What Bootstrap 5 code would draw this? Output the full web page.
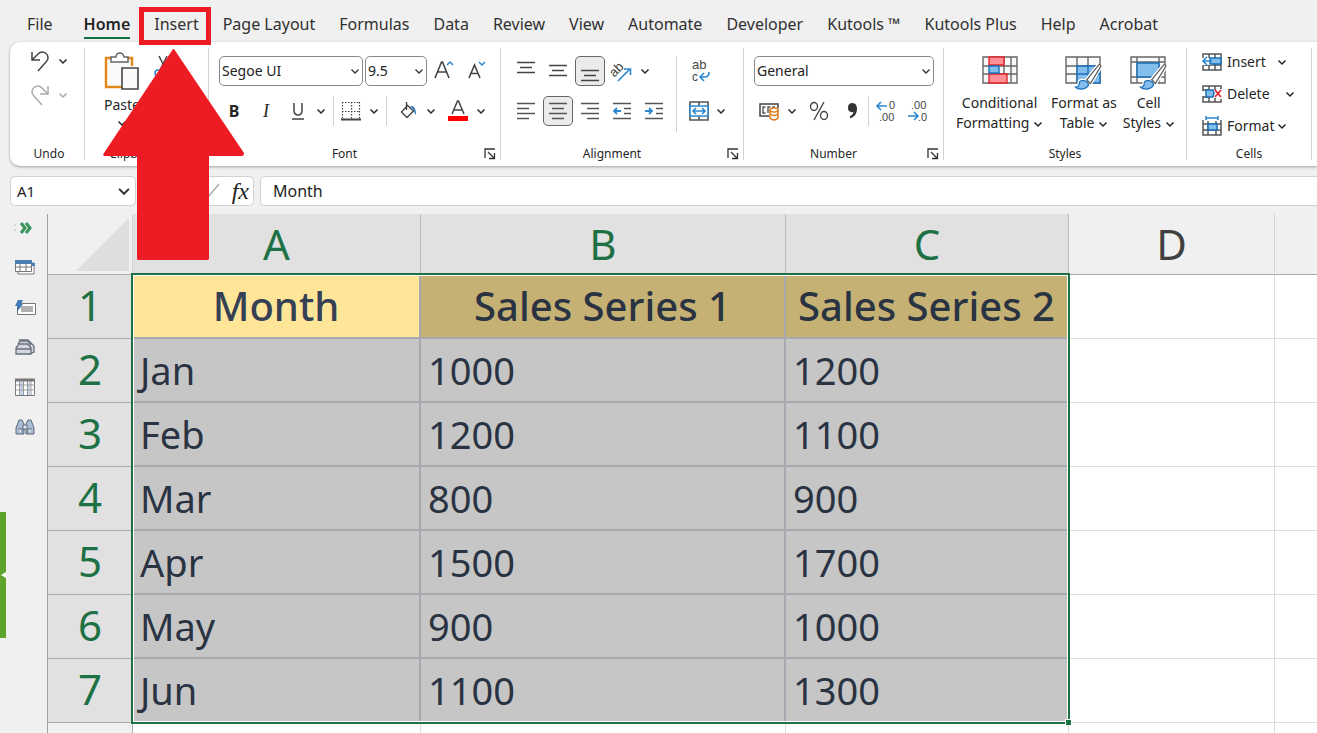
<!DOCTYPE html>
<html lang="en">
<head>
<meta charset="utf-8">
<meta name="viewport" content="width=device-width, initial-scale=1">
<title>Sales workbook</title>
<link href="https://cdn.jsdelivr.net/npm/bootstrap@5.3.0/dist/css/bootstrap.min.css" rel="stylesheet">
<style>
:root{--ink:#262626;--line:#d1d1d1;--green:#1e7145;--red:#ed1c24;--blue:#2b88d0}
body{background:#f0f0f0;color:var(--ink);font-family:"Noto Sans","Open Sans",sans-serif;font-size:14px;line-height:20px}
button{color:inherit}
svg{display:block;flex:none;overflow:visible}
svg text{font-family:"Liberation Sans",sans-serif}
.tabs{height:42px;padding:11px 0 0 27px;gap:24px;font-size:16px;line-height:26px}
.tabs a{color:#303030;text-decoration:none;white-space:nowrap}
.tabs .current{font-weight:600;box-shadow:0 2px 0 #f0f0f0,0 4px 0 #107040;height:24px;color:#262626;margin-left:7px}
.callout-box{position:absolute;left:-15px;right:-12px;top:-4px;height:38px;border:5px solid var(--red);z-index:5}
.callout-arrow{position:absolute;left:-51px;top:38px;z-index:5;pointer-events:none}
.ribbon{height:124px;margin-left:10px;background:#fff;border-radius:10px 0 0 10px;box-shadow:0 1px 3px #0005}
.group{margin:6px 0;border-right:1px solid var(--line);flex:none;display:flex;flex-direction:column}
.group-body{flex:1;padding:8px 0 0 10px}
.group-name{font-size:12px;line-height:12px;height:12px;text-align:center;display:flex}
.group-name span{flex:1}
.launch{width:20px;padding:0;border:0;background:none;display:flex;align-items:center}
.tool{width:30px;height:30px;padding:0;border:1px solid transparent;border-radius:5px;background:none;display:flex;align-items:center;justify-content:center;flex:none}
.tool.on{background:#ebebeb;border-color:#666}
.more{width:12px;height:30px;padding:0;border:0;background:none;display:flex;align-items:center;justify-content:center;flex:none}
.tools{display:flex;gap:2px;height:30px}
.tools-first{margin-bottom:10px}
.rule{width:1px;background:var(--line);flex:none}
.pick{height:30px;padding:0 18px 0 2px;border:1px solid #888;border-radius:5px;font-size:14px;line-height:20px;color:#222;background-position:right 2px center;background-size:10px;
background-image:url("data:image/svg+xml,%3Csvg xmlns='http://www.w3.org/2000/svg' viewBox='0 0 10 10'%3E%3Cpath d='M1.5 3.5 5 7l3.500-3.500' fill='none' stroke='%23333' stroke-width='1.400'/%3E%3C/svg%3E")}
.big{padding:0;border:0;background:none;display:flex;flex-direction:column;align-items:center;gap:7px;text-align:center;white-space:nowrap}
.big svg.chev{display:inline-block;vertical-align:middle}
.cellcmd{height:32px;padding:0;border:0;background:none;display:flex;align-items:center;gap:5px}
.fbar{height:30px;margin:10px 0 8px 10px;gap:6px;display:flex}
.fbox{border:1px solid var(--line);border-radius:5px;background-color:#fff;height:30px;font-size:16px;color:#222}
.namebox{width:126px;padding-left:6px;font-size:15px;background-position:right 4px center;background-size:14px}
.rail{width:48px;border-right:1px solid #a0a0a0;display:flex;flex-direction:column;align-items:center;position:relative;flex:none;padding-left:3px}
.rail button{height:40px;width:30px;padding:0;border:0;background:none;display:flex;align-items:center;justify-content:center}
.rail .first{height:28px;margin-bottom:5px}
.rail .drawer{position:absolute;left:0;top:298px;width:6px;height:126px;background:#5ea42b}
.sheet{position:relative;background:#fff}
.grid{table-layout:fixed;width:100%;border-collapse:separate;border-spacing:0;color:#2a3342;font-size:38px;line-height:50px}
.grid th,.grid td{height:64px;padding:0 7px;border:solid #dcdcdc;border-width:0 1px 1px 0;white-space:nowrap;overflow:hidden}
.grid tr>*:last-child{border-right:0}
.grid thead th{height:61px;background:#f0f0f0;border-color:#ababab;border-right-color:#d4d4d4;font-size:42px;font-weight:400;text-align:center;color:#404040;padding:0}
.grid tbody th{background:#e1e1e1;border-color:#ababab;font-size:42px;font-weight:400;text-align:center;color:var(--green);padding:0 0 3px}
.grid thead th.sel{background:#e1e1e1;color:var(--green);border-right-color:#bbb}
.grid td.sel{background:#c6c6c6;border:solid #a8a8b0;border-width:0 2px 2px 0}
.grid td.head{background:#c6b174;font-size:40px;font-weight:500;text-align:center;padding:0}
.grid td.head.active{background:#ffe598;color:#364054}
.grid .after th{background:#f0f0f0}
.marquee{position:absolute;left:83px;top:59px;width:939px;height:451px;border:2px solid var(--green);box-shadow:inset 0 0 0 1px #fff;pointer-events:none}
.marquee i{position:absolute;right:-4px;bottom:-4px;width:7px;height:7px;background:var(--green);border:1px solid #fff}
</style>
</head>
<body>
<svg width="0" height="0" class="position-absolute" aria-hidden="true">
<defs>
<symbol id="chev" viewBox="0 0 10 10"><path d="M1.500 3.500 5 7l3.500-3.500" fill="none" stroke="currentColor" stroke-width="1.500"/></symbol>
<symbol id="launch" viewBox="0 0 12 12"><path d="M1 10V1h10M4 4l6 6M10.500 5v5.500H5" fill="none" stroke="#333" stroke-width="1.300"/></symbol>
<symbol id="brush" viewBox="0 0 30 28"><path d="M13 17 26 1q3-1 2 2L17 21z" fill="#fff" stroke="#fff" stroke-width="4"/><path d="M1 25q4 0 4-4t5-3 5 5q-3 4-8 4-4 0-6-2z" fill="#83bdec" stroke="#fff" stroke-width="4"/><path d="M13 17 26 1q3-1 2 2L17 21z" fill="#fff" stroke="#555" stroke-width="1.300"/><path d="M1 25q4 0 4-4t5-3 5 5q-3 4-8 4-4 0-6-2z" fill="#83bdec" stroke="#1b6fb8" stroke-width="1.300"/></symbol>
</defs>
</svg>
<div class="vh-100 d-flex flex-column overflow-hidden">
<nav class="tabs d-flex flex-shrink-0" aria-label="Ribbon tabs">
<a href="#">File</a><a href="#" class="current">Home</a>
<span class="position-relative"><a href="#">Insert</a><span class="callout-box"></span>
<svg class="callout-arrow" width="142" height="212" viewBox="0 0 142 212"><path d="M70 0h1L141 104q0 3-2 3h-33v103l-1 1H35l-1-1V107H2q-3 0-1-3z" fill="#ed1c24"/></svg></span>
<a href="#">Page Layout</a><a href="#">Formulas</a><a href="#">Data</a><a href="#">Review</a><a href="#">View</a><a href="#">Automate</a><a href="#">Developer</a><a href="#">Kutools ™</a><a href="#">Kutools Plus</a><a href="#">Help</a><a href="#">Acrobat</a>
</nav>

<div class="ribbon d-flex flex-shrink-0">
<section class="group" style="width:75px">
<div class="group-body pt-0" style="padding-left:15px;margin-top:-2px">
<div class="tools"><button class="tool" aria-label="Undo"><svg width="20" height="22" fill="none" stroke="#444" stroke-width="1.500"><path d="M2 2v8h8M2.500 9.500 8 4c4-4 10-1 10 4q0 2-2 4l-8 9"/></svg></button><button class="more" aria-label="Undo history"><svg width="10" height="10"><use href="#chev"/></svg></button></div>
<div class="tools mt-1" style="color:#aaa"><button class="tool" aria-label="Redo"><svg width="20" height="22" fill="none" stroke="#aaa" stroke-width="1.500"><path d="M18 2v8h-8M17.500 9.500 12 4C8 0 2 3 2 8q0 2 2 4l8 9"/></svg></button><button class="more" aria-label="Redo history"><svg width="10" height="10"><use href="#chev"/></svg></button></div>
</div><div class="group-name ps-1"><span>Undo</span></div></section>

<section class="group" style="width:124px">
<div class="group-body d-flex align-items-start pt-1 gap-2">
<button class="big" style="gap:4px;margin-left:9px"><svg width="36" height="39" fill="none"><path d="M8 6H2v29h16M22 6h6v8" stroke="#e08a1e" stroke-width="2.500"/><path d="M4 8h22v7h-8v18H4z" fill="#fafafa"/><path d="M7 10V5h5q0-4 4-4 3 0 4 4h4v5z" fill="#fff" stroke="#666" stroke-width="1.500"/><path d="M18 16h16v21H18z" fill="#fafafa" stroke="#444" stroke-width="1.600"/></svg><span>Paste<br><svg class="chev" style="margin-top:-6px" width="10" height="10"><use href="#chev"/></svg></span></button>
<button class="tool" aria-label="Cut"><svg width="16" height="22" fill="none"><path d="m4 0 7 14M12 0 5 14" stroke="#444" stroke-width="1.500"/><circle cx="3" cy="17" r="3" stroke="#2b88d0" stroke-width="1.500"/><circle cx="13" cy="17" r="3" stroke="#2b88d0" stroke-width="1.500"/></svg></button>
</div><div class="group-name"><span>Clipboard</span><button class="launch" aria-label="Clipboard options"><svg width="12" height="12"><use href="#launch"/></svg></button></div></section>

<section class="group" style="width:292px">
<div class="group-body">
<div class="tools tools-first"><select class="form-select pick" style="width:144px" aria-label="Font"><option>Segoe UI</option></select><select class="form-select pick" style="width:62px" aria-label="Font size"><option>9.5</option></select>
<button class="tool" aria-label="Grow font"><svg width="22" height="22" fill="none"><path d="M2 18 8.500 2h1L16 18M4.500 12h9" stroke="#444" stroke-width="1.600"/><path d="m14 5 3-3 3 3" stroke="#2b88d0" stroke-width="1.500"/></svg></button>
<button class="tool" aria-label="Shrink font"><svg width="20" height="22" fill="none"><path d="m3 18 5.500-13L14 18M5 13.500h7" stroke="#444" stroke-width="1.600"/><path d="m13 2 3 3 3-3" stroke="#2b88d0" stroke-width="1.500"/></svg></button></div>
<div class="tools">
<button class="tool fw-bold" style="font-size:16px">B</button><button class="tool" style="font:italic 18px 'Liberation Serif',serif">I</button><button class="tool" aria-label="Underline"><svg width="14" height="18" fill="none" stroke="#444" stroke-width="1.500"><path d="M3 1v7q0 5 4 5t4-5V1M1 17h12"/></svg></button><button class="more" aria-label="Underline style"><svg width="10" height="10"><use href="#chev"/></svg></button>
<span class="rule ms-1"></span>
<button class="tool" aria-label="Borders"><svg width="20" height="20" fill="none" stroke="#444"><path d="M1 1.500h18M1 10.500h18M1.500 1v17M10.500 1v17M18.500 1v17" stroke-width="1.200" stroke-dasharray="1.500 1.500"/><path d="M0 18.500h20" stroke-width="2"/></svg></button><button class="more" aria-label="Border styles"><svg width="10" height="10"><use href="#chev"/></svg></button>
<span class="rule ms-1"></span>
<button class="tool ms-1" aria-label="Fill colour"><svg width="17" height="19" fill="none"><path d="M8 3 1.500 10 7 15.500 13.500 9 6.500 2.500V0M6.500 2v6" stroke="#444" stroke-width="1.400"/><path d="M10 4q6-1 6 9-2-2-2-5z" fill="#1b6fb8"/></svg></button><button class="more" aria-label="Fill colours"><svg width="10" height="10"><use href="#chev"/></svg></button>
<button class="tool ms-1" aria-label="Font colour"><svg width="20" height="20" fill="none"><path d="M4 13 9.500 0h1L16 13M6 9h8" stroke="#444" stroke-width="1.500"/><path d="M0 15h20v5H0z" fill="red"/></svg></button><button class="more" aria-label="Font colours"><svg width="10" height="10"><use href="#chev"/></svg></button>
</div></div><div class="group-name"><span>Font</span><button class="launch" aria-label="Font options"><svg width="12" height="12" class="ms-1"><use href="#launch"/></svg></button></div></section>

<section class="group" style="width:243px">
<div class="group-body d-flex">
<div style="width:165px">
<div class="tools tools-first">
<button class="tool" aria-label="Top align"><svg width="18" height="18" stroke="#444" stroke-width="1.500"><path d="M0 .500h18M3 5.500h12M0 10.500h18"/></svg></button>
<button class="tool" aria-label="Middle align"><svg width="18" height="12" stroke="#444" stroke-width="1.500"><path d="M0 .500h18M3 5.500h12M0 10.500h18"/></svg></button>
<button class="tool on" aria-label="Bottom align"><svg width="18" height="4" stroke="#444" stroke-width="1.500"><path d="M0 1.500h18M3 6.500h12M0 11.500h18"/></svg></button>
<button class="tool" aria-label="Orientation"><svg width="22" height="22" fill="none"><text x="0" y="14" transform="rotate(-45 6 12)" font-size="13" fill="#444">ab</text><path d="M7 21 19 9M13 9h6.500v6" stroke="#2b88d0" stroke-width="1.600"/></svg></button><button class="more" aria-label="Orientation menu"><svg width="10" height="10"><use href="#chev"/></svg></button></div>
<div class="tools">
<button class="tool" aria-label="Align left"><svg width="18" height="18" stroke="#555" stroke-width="1.500"><path d="M0 1.500h18M0 6.500h12M0 11.500h18M0 16.500h12"/></svg></button>
<button class="tool on" aria-label="Centre"><svg width="18" height="18" stroke="#555" stroke-width="1.500"><path d="M0 1.500h18M3 6.500h12M0 11.500h18M3 16.500h12"/></svg></button>
<button class="tool" aria-label="Align right"><svg width="18" height="18" stroke="#555" stroke-width="1.500"><path d="M0 1.500h18M6 6.500h12M0 11.500h18M6 16.500h12"/></svg></button>
<button class="tool" aria-label="Decrease indent"><svg width="18" height="18" fill="none" stroke="#555" stroke-width="1.500"><path d="M0 1.500h18M11 6.500h7M11 11.500h7M0 16.500h18"/><path d="M8 9H1m3-3L1 9l3 3" stroke="#2b88d0" stroke-width="1.800"/></svg></button>
<button class="tool" aria-label="Increase indent"><svg width="18" height="18" fill="none" stroke="#555" stroke-width="1.500"><path d="M0 1.500h18M11 6.500h7M11 11.500h7M0 16.500h18"/><path d="M0 9h7M4 6l3 3-3 3" stroke="#2b88d0" stroke-width="1.800"/></svg></button></div>
</div>
<span class="rule mb-3 me-2"></span>
<div><div class="tools tools-first"><button class="tool" aria-label="Wrap text"><svg width="18" height="20" fill="none"><text x="1" y="8" font-size="13" fill="#444">ab</text><text x="1" y="20" font-size="12" fill="#444">c</text><path d="M18 11q0 5-4 5H9m4-4-4 4 4 4" stroke="#2b88d0" stroke-width="1.600"/></svg></button></div>
<div class="tools"><button class="tool" style="width:28px" aria-label="Merge and centre"><svg width="20" height="20" fill="none"><path d="M1 1h18v18H1zM10 1v18" stroke="#555" stroke-width="1.600"/><path d="M1 5h18v10H1z" fill="#fff" stroke="#2b88d0" stroke-width="1.600"/><path d="M4 10h12M7 7l-3 3 3 3m6-6 3 3-3 3" stroke="#2b88d0" stroke-width="1.600"/></svg></button><button class="more" aria-label="Merge menu"><svg width="10" height="10"><use href="#chev"/></svg></button></div></div>
</div><div class="group-name"><span>Alignment</span><button class="launch" aria-label="Alignment options"><svg width="12" height="12" class="ms-1"><use href="#launch"/></svg></button></div></section>

<section class="group" style="width:200px">
<div class="group-body">
<select class="form-select pick tools-first" style="width:180px" aria-label="Number format"><option>General</option></select>
<div class="tools">
<button class="tool" aria-label="Accounting format"><svg width="20" height="18" fill="none"><path d="M19 6V2H1v12h9" stroke="#444" stroke-width="1.500"/><path d="M6.500 5H4v6h2.500M11.500 5H9v6M16 5h-2v2" stroke="#555" stroke-width="1.400"/><path d="M11 8v8q4 4 8 0V8z" fill="#fff" stroke="#e07b1a" stroke-width="1.500"/><ellipse cx="15" cy="8" rx="4" ry="2" fill="#fff" stroke="#e07b1a" stroke-width="1.500"/><path d="M11 12q4 3 8 0" stroke="#e07b1a" stroke-width="1.500"/></svg></button><button class="more" aria-label="Currencies"><svg width="10" height="10"><use href="#chev"/></svg></button>
<button class="tool ms-1" aria-label="Percent"><svg width="20" height="20" fill="none" stroke="#444" stroke-width="1.400"><ellipse cx="5" cy="5.500" rx="3.500" ry="4"/><ellipse cx="15" cy="14.500" rx="3.500" ry="4"/><path d="M15 1 5 19"/></svg></button>
<button class="tool ps-1" aria-label="Comma style"><svg width="10" height="16"><path d="M4.500 0Q9 0 9 6q0 7-7 9.500V13q3-1 3.500-4Q0 10 0 4.500 0 0 4.500 0z" fill="#333"/></svg></button>
<span class="rule"></span>
<button class="tool" aria-label="Increase decimals"><svg width="20" height="20" fill="none"><text x="13" y="8" font-size="11" fill="#444">0</text><text x="3" y="20" font-size="11" fill="#444">.00</text><path d="M11 5H1m4-4L1 5l4 4" stroke="#2b88d0" stroke-width="1.600"/></svg></button>
<button class="tool" aria-label="Decrease decimals"><svg width="20" height="20" fill="none"><text x="3" y="8" font-size="11" fill="#444">.00</text><text x="10" y="20" font-size="11" fill="#444">.0</text><path d="M0 15h10M6 11l4 4-4 4" stroke="#2b88d0" stroke-width="1.600"/></svg></button>
</div></div><div class="group-name"><span>Number</span><button class="launch" aria-label="Number options"><svg width="12" height="12" class="ms-1"><use href="#launch"/></svg></button></div></section>

<section class="group" style="width:243px">
<div class="group-body d-flex align-items-start gap-2 pt-2" style="padding-left:12px">
<button class="big"><svg width="36" height="30" fill="none"><path d="M1 1h34v26H1zM1 10h34M1 18h34M8 1v26M22 1v26M29 1v26" fill="#fafafa" stroke="#666" stroke-width="1.400"/><path d="M7 1h15v8H7zM7 18h18v9H7z" fill="#ff8f96" stroke="#e0252b" stroke-width="1.400"/><path d="M7 10h10v7H7z" fill="#83bdec" stroke="#1b6fb8" stroke-width="1.400"/></svg><span>Conditional<br>Formatting <svg class="chev" width="10" height="10"><use href="#chev"/></svg></span></button>
<button class="big"><svg width="38" height="30" fill="none"><path d="M1 1h34v26H1zM1 10h34M1 18h34M12 1v26M23 1v26" fill="#fafafa" stroke="#666" stroke-width="1.400"/><path d="M12 10h23v17H12zM12 18h23M23 10v17" fill="#83bdec" stroke="#1b6fb8" stroke-width="1.400"/><use href="#brush" x="9" y="8" width="29" height="26"/></svg><span>Format as<br>Table <svg class="chev" width="10" height="10"><use href="#chev"/></svg></span></button>
<button class="big" style="margin-left:-2px"><svg width="38" height="30" fill="none"><path d="M1 1h34v26H1zM1 6h34M1 21h34M7 1v26M29 1v26" fill="#fafafa" stroke="#666" stroke-width="1.400"/><path d="M7 7h22v14H7z" fill="#83bdec" stroke="#1b6fb8" stroke-width="1.400"/><use href="#brush" x="9" y="8" width="29" height="26"/></svg><span>Cell<br>Styles <svg class="chev" width="10" height="10"><use href="#chev"/></svg></span></button>
</div><div class="group-name"><span>Styles</span></div></section>

<section class="group" style="width:125px">
<div class="group-body" style="padding:0 0 0 15px;margin-top:-2px">
<button class="cellcmd"><svg width="20" height="18" fill="none"><path d="M1 1h18v16H1zM7 1v16M13 1v16M1 12h18" stroke="#555" stroke-width="1.500"/><path d="M0 5h10v7H0z" fill="#fff"/><path d="M8 5h11v6H8z" fill="#83bdec" stroke="#1b6fb8" stroke-width="1.500"/><path d="M10 8H1m4-4L1 8l4 4" stroke="#2b88d0" stroke-width="1.600"/></svg><span style="width:45px" class="text-start">Insert</span><svg width="10" height="10"><use href="#chev"/></svg></button>
<button class="cellcmd"><svg width="20" height="18" fill="none"><path d="M1 6V1h18v3M1 11v6h18v-3M7 1v16M13 1v4m0 8v4M1 5h6M1 12h6" stroke="#555" stroke-width="1.500"/><path d="M4 5h7l1 3-1 4H4z" fill="#83bdec" stroke="#1b6fb8" stroke-width="1.500"/><path d="m13 5 6 7m0-7-6 7" stroke="#e0252b" stroke-width="1.600"/></svg><span style="width:53px" class="text-start">Delete</span><svg width="10" height="10"><use href="#chev"/></svg></button>
<button class="cellcmd"><svg width="20" height="20" fill="none"><path d="M1 4v15h18V4M1 8h18M1 14h18M6 5v14M14 5v14" stroke="#555" stroke-width="1.500"/><path d="M6 8h9v6H6z" fill="#83bdec" stroke="#1b6fb8" stroke-width="1.500"/><path d="M4 2h12M4 0v4M16 0v4" stroke="#2b88d0" stroke-width="1.500"/></svg><span style="width:45px" class="text-start">Format</span><svg width="10" height="10"><use href="#chev"/></svg></button>
</div><div class="group-name"><span>Cells</span></div></section>
</div>

<div class="fbar flex-shrink-0">
<select class="form-select pick fbox namebox" aria-label="Name box"><option>A1</option></select>
<div class="fbox d-flex align-items-center justify-content-end gap-2" style="width:112px"><svg width="18" height="14" fill="none" stroke="#aaa" stroke-width="1.500"><path d="m2 8 5 4L17 0"/></svg><button class="border-0 bg-transparent p-0 px-1" style="font:italic 24px 'Liberation Serif',serif" aria-label="Insert function"><i>fx</i></button></div>
<input class="fbox flex-fill rounded-end-0 border-end-0" style="padding-left:12px" value="Month" aria-label="Formula">
</div>

<div class="d-flex flex-fill overflow-hidden">
<aside class="rail">
<button class="first" aria-label="Expand pane"><svg width="22" height="12" fill="none"><path d="M0 3h2M0 8h2" stroke="#bbb"/><path d="m7 1 4 5-4 5m5-10 4 5-4 5" stroke="#3b965e" stroke-width="3"/></svg></button>
<button aria-label="Workbooks"><svg width="20" height="15" fill="none"><path d="M3 3h16v11H3z" fill="#fff" stroke="#777"/><path d="M.5.500h16v11H.5zM.500 7h16M5 4v8M11 4v8" fill="#fff" stroke="#777"/><path d="M0 0h17v4H0zM17 3h3v3h-3z" fill="#4a7eb5"/></svg></button>
<button aria-label="AutoText"><svg width="21" height="15"><path d="M2.500 3.500h18v11h-18z" fill="#fff" stroke="#777"/><path d="M6 6h12v6H6z" fill="#b0b0b0"/><path d="M3 0h5L6 4h2l-6 8 1-6H0z" fill="#3d79b8"/></svg></button>
<button aria-label="Names"><svg width="20" height="16" fill="#d5d5e2" stroke="#68707d" stroke-width="1.300"><path d="m5 1 8 0 6 6v6l-5 2V9z"/><path d="m3 5 2-3h8l3 4M1 9l3-4h9l3 4v6H1zM1 10h15"/></svg></button>
<button aria-label="Columns"><svg width="20" height="17" fill="none"><path d="M.500.500h19v16H.500z" fill="#fff" stroke="#777"/><path d="M5 3h3v13H5zM12 3h3v13h-3z" fill="#c3d5ea"/><path d="M4.500 2v14M8.500 2v14M12.500 2v14M16 2v14M0 6h20M0 11h20" stroke="#999"/><path d="M0 1h20" stroke="#777" stroke-width="3"/></svg></button>
<button aria-label="Find"><svg width="20" height="16" fill="#a9bdd5" stroke="#5d6876"><path d="M4 1h3l2 4v10H1V9zM16 1h-3l-2 4v10h8V9z"/><path d="M8 6h4v4H8zM3 10h4v5M13 15v-5h4" fill="#e6edf5"/></svg></button>
<button class="drawer" aria-label="Open drawer"><svg width="5" height="6"><path d="M5 0v6L0 3z" fill="#fff"/></svg></button>
</aside>
<main class="sheet flex-fill overflow-hidden">
<table class="grid">
<colgroup><col style="width:85px"><col style="width:288px"><col style="width:365px"><col style="width:283px"><col style="width:206px"><col></colgroup>
<thead><tr><th aria-label="Select all"><svg class="ms-auto" style="margin-right:3px" width="53" height="53"><path d="M53 0v53H0z" fill="#dedede"/></svg></th><th class="sel">A</th><th class="sel">B</th><th class="sel">C</th><th>D</th><th></th></tr></thead>
<tbody>
<tr><th>1</th><td class="sel head active">Month</td><td class="sel head">Sales Series 1</td><td class="sel head">Sales Series 2</td><td></td><td></td></tr>
<tr><th>2</th><td class="sel">Jan</td><td class="sel">1000</td><td class="sel">1200</td><td></td><td></td></tr>
<tr><th>3</th><td class="sel">Feb</td><td class="sel">1200</td><td class="sel">1100</td><td></td><td></td></tr>
<tr><th>4</th><td class="sel">Mar</td><td class="sel">800</td><td class="sel">900</td><td></td><td></td></tr>
<tr><th>5</th><td class="sel">Apr</td><td class="sel">1500</td><td class="sel">1700</td><td></td><td></td></tr>
<tr><th>6</th><td class="sel">May</td><td class="sel">900</td><td class="sel">1000</td><td></td><td></td></tr>
<tr><th>7</th><td class="sel">Jun</td><td class="sel">1100</td><td class="sel">1300</td><td></td><td></td></tr>
<tr class="after"><th></th><td></td><td></td><td></td><td></td><td></td></tr>
</tbody></table>
<div class="marquee"><i></i></div>
</main>
</div>
</div>
<script src="https://cdn.jsdelivr.net/npm/bootstrap@5.3.0/dist/js/bootstrap.bundle.min.js"></script>
</body>
</html>
